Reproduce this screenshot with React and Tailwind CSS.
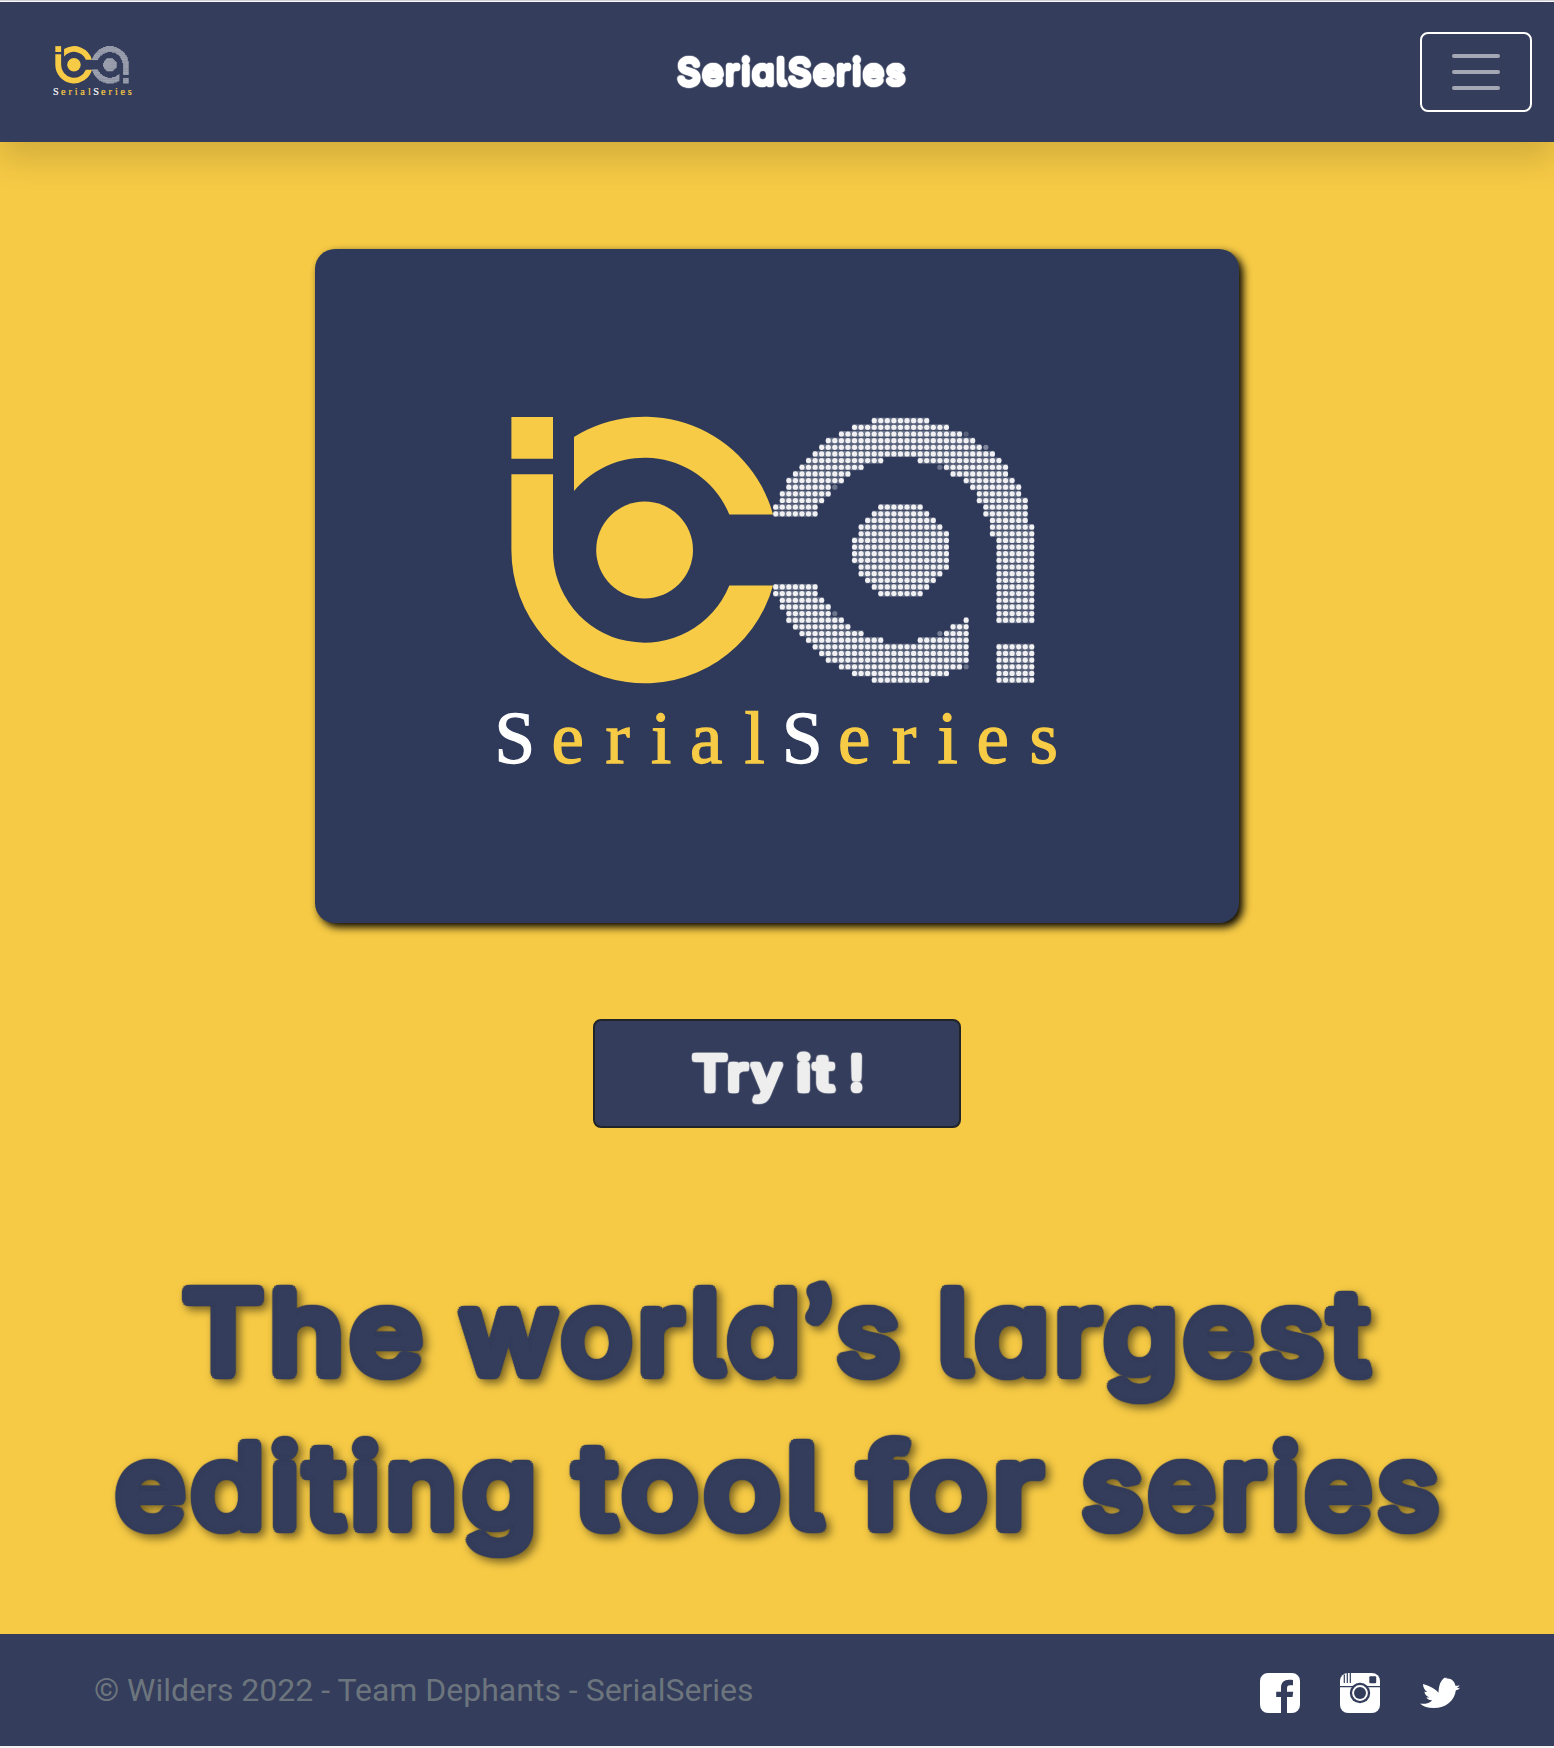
import { useLayoutEffect, useRef, useState } from "react";

// Columns of the dotted half of the logo, one entry per row: [first, last] runs.
const RIGHT_STEM = [34, 39];
const DOT_ROWS = [
  [[15, 23]],
  [[12, 26]],
  [[10, 28]],
  [[8, 30]],
  [[7, 31]],
  [[6, 33]],
  [[5, 16], [22, 34]],
  [[4, 13], [26, 35]],
  [[3, 11], [27, 35]],
  [[2, 10], [29, 36]],
  [[2, 8], [30, 37]],
  [[1, 8], [31, 37]],
  [[1, 7], [31, 38]],
  [[0, 6], [16, 22], [32, 38]],
  [[0, 6], [15, 23], [32, 38]],
  [[14, 24], [33, 38]],
  [[13, 25], [33, 39]],
  [[13, 26], [33, 39]],
  [[12, 26], RIGHT_STEM],
  [[12, 26], RIGHT_STEM],
  [[12, 26], RIGHT_STEM],
  [[12, 26], RIGHT_STEM],
  [[13, 26], RIGHT_STEM],
  [[13, 25], RIGHT_STEM],
  [[14, 24], RIGHT_STEM],
  [[0, 6], [15, 23], RIGHT_STEM],
  [[0, 6], [16, 22], RIGHT_STEM],
  [[1, 7], RIGHT_STEM],
  [[1, 8], RIGHT_STEM],
  [[2, 8], RIGHT_STEM],
  [[2, 10], [29, 29], RIGHT_STEM],
  [[3, 11], [27, 29]],
  [[4, 13], [26, 29]],
  [[5, 16], [22, 29]],
  [[6, 29], RIGHT_STEM],
  [[7, 29], RIGHT_STEM],
  [[8, 29], RIGHT_STEM],
  [[10, 28], RIGHT_STEM],
  [[12, 26], RIGHT_STEM],
  [[15, 23], RIGHT_STEM],
];

// Half-faded dots on the rim: [column, row, opacity]
const FAINT_DOTS = [
  [29, 2, 0.2], [32, 4, 0.4], [25, 7, 0.3], [9, 10, 0.3],
  [9, 29, 0.3], [25, 32, 0.35], [29, 37, 0.3],
];

const dots = DOT_ROWS.flatMap((runs, row) =>
  runs.flatMap(([from, to]) =>
    Array.from({ length: to - from + 1 }, (_, i) => [from + i, row, 0.9])
  )
).concat(FAINT_DOTS);

const dotX = (col) => 775.7 + col * 6.567;
const dotY = (row) => 420.7 + row * 6.65;

function Logo({ className }) {
  return (
    <svg viewBox="496 416 562 350" className={`overflow-visible ${className}`} aria-label="SerialSeries">
      <g fill="#f7cb45">
        <path d="M511.4 417H553v41.8h-41.6z" />
        <path d="M511.4 474.3H553V550A91.5 91.5 0 0 0 729.3 585.5H773A133.2 133.2 0 0 1 511.4 550z" />
        <path d="M574 437A133.2 133.2 0 0 1 773 514.5H729.3A91.5 91.5 0 0 0 574 491z" />
        <circle cx="644.6" cy="550" r="48.4" />
      </g>
      <g fill="#fff">
        {DOT_ROWS.flatMap((runs, row) =>
          runs.map(([from, to]) => (
            <rect key={`${row}-${from}`} x={dotX(from) - 2.2} y={dotY(row) - 3} width={dotX(to) - dotX(from) + 4.4} height="6" opacity="0.3" />
          ))
        )}
        {dots.map(([col, row, opacity]) => (
          <circle key={`${col}-${row}`} cx={dotX(col)} cy={dotY(row)} r="2.6" opacity={opacity} />
        ))}
      </g>
      <g fontFamily="'Liberation Serif', serif" fontSize="73" fill="#f7cb45" stroke="#f7cb45" strokeWidth="1.3">
        <text y="763" x="494.5 551.5 605.500 651 690 744.500"><tspan fill="#fff" stroke="#fff">S</tspan>erial</text>
        <text y="763" x="782 838 892 937.500 976.500 1029.500"><tspan fill="#fff" stroke="#fff">S</tspan>eries</text>
      </g>
    </svg>
  );
}

// Stretches one word horizontally to the width of its box.
function Word({ children, className }) {
  const box = useRef(null);
  const text = useRef(null);
  const [scale, setScale] = useState(1);
  useLayoutEffect(() => {
    const trailing = parseFloat(getComputedStyle(text.current).letterSpacing) || 0;
    setScale(box.current.clientWidth / (text.current.offsetWidth - trailing));
  }, [children]);
  return (
    <span ref={box} className={`block shrink-0 whitespace-nowrap ${className}`}>
      <span ref={text} className="inline-block origin-left tracking-[0.038em]" style={{ transform: `scaleX(${scale})` }}>
        {children}
      </span>
    </span>
  );
}

const ROUNDED =
  "font-['Inter',sans-serif] font-medium [font-feature-settings:'cv11','cv05'] [text-shadow:0.043em_0_1px,0.040em_0.017em_1px,0.031em_0.032em_1px,0.016em_0.042em_1px,0_0.045em_1px,-0.016em_0.042em_1px,-0.031em_0.032em_1px,-0.040em_0.017em_1px,-0.043em_0_1px,-0.040em_-0.017em_1px,-0.031em_-0.032em_1px,-0.016em_-0.042em_1px,0_-0.045em_1px,0.016em_-0.042em_1px,0.031em_-0.032em_1px,0.040em_-0.017em_1px]";

function Header() {
  return (
    <header className="relative flex h-[140px] items-center justify-between bg-[#343d5b] pl-[53px] pr-[22px] shadow-[0_16px_32px_rgba(0,0,0,0.15)]">
      <Logo className="mb-1 h-[49px] w-[79px]" />
      <div className={`ml-[29px] text-[37px] leading-[48px] text-white ${ROUNDED}`}>
        <Word className="w-[228px]">SerialSeries</Word>
      </div>
      <button className="flex h-20 w-28 flex-col items-center justify-center gap-3 rounded-lg border-2 border-white">
        <span className="h-1 w-12 rounded-full bg-white/55" />
        <span className="h-1 w-12 rounded-full bg-white/55" />
        <span className="h-1 w-12 rounded-full bg-white/55" />
      </button>
    </header>
  );
}

function FacebookIcon() {
  return (
    <svg viewBox="0 0 40 40" className="size-10">
      <path fill="#fff" fillRule="evenodd" d="M8 0h24a8 8 0 0 1 8 8v24a8 8 0 0 1-8 8h-5V24h5.5l.7-5.3H27v-3.2c0-2.2.8-3.3 3-3.3h3V7.1c-1-.2-2.300-.3-4-.3-5 0-8 3-8 7.900v4h-4.800V24H21v16H8a8 8 0 0 1-8-8V8a8 8 0 0 1 8-8z" />
    </svg>
  );
}

function InstagramIcon() {
  return (
    <svg viewBox="0 0 40 40" className="size-10">
      <rect width="40" height="40" rx="8" fill="#fff" />
      <g fill="#343d5b">
        <path d="M3.700 1.500h1.200V10H3.700zM6.700 0h1.200v10H6.700zM9.700 0h1.200v10H9.700zM0 13h40v1.200H0z" />
        <rect x="29.300" y="3.300" width="6.900" height="6.900" rx="1" />
        <circle cx="20" cy="20" r="10.200" />
      </g>
      <circle cx="20" cy="20" r="7.900" fill="#fff" />
      <circle cx="20" cy="20" r="6" fill="#343d5b" />
    </svg>
  );
}

function TwitterIcon() {
  return (
    <svg viewBox="0 0 40 40" className="size-10">
      <path
        fill="#fff"
        d="M0 30.400c4 1 7.800.2 10.500-1.700.8-.6 1.400-1 1.500-1.500-2.500.2-4.300-.7-5.600-2.700 1 .1 2 .1 2.700-.3-2.800-1-4.400-3-4.700-5.700.9.400 1.700.6 2.700.5C4.700 17.200 3 14.300 3 11c4.300 1.400 8.500 3 12 5.600 1.400 1 2.500 2 3.500 3.200C18.700 13 20.200 7.300 25.300 4.300L25.100 5.300 27 4.400 26.400 5.500c2.300-.4 4.700.2 6.700 2.400 1.300 1.300 2.100 3 2.300 4.800.9.300 2.500.1 4.100-.5-.4 1.200-1.400 2.200-2.800 2.700 1 .3 2.200.2 3.300-.2-.8 1.200-2.200 2.300-4.100 2.500C34.400 27.600 26 35.100 13.500 35 8 34.900 3 33.500 0 30.400z"
      />
    </svg>
  );
}

function Footer() {
  return (
    <footer className="flex h-28 items-center justify-between bg-[#343d5b] pl-[94px] pr-[94px]">
      <p className="font-['Roboto',sans-serif] text-[32px] leading-[48px] text-[#6c757d]">
        © Wilders 2022 - Team Dephants - SerialSeries
      </p>
      <div className="mt-[6px] flex gap-10">
        <FacebookIcon />
        <InstagramIcon />
        <TwitterIcon />
      </div>
    </footer>
  );
}

export default function App() {
  return (
    <div className="flex h-[1748px] w-[1554px] flex-col overflow-hidden border-b-2 border-[#f2f2f2] bg-[#f6ca45]">
      <div className="h-px shrink-0 bg-[#d3d5dc]" />
      <div className="h-px shrink-0 bg-white" />
      <Header />
      <main className="flex h-[1492px] flex-col items-center">
        <div className="mt-[107px] flex h-[674px] w-[924px] items-start justify-center rounded-[20px] bg-[#2f3a5a] pt-[167px] shadow-[4px_4px_8px_#000]">
          <Logo className="h-[350px] w-[562px]" />
        </div>
        <button className={`mt-24 flex h-[109px] w-[368px] items-center justify-center gap-[15px] rounded-lg border-2 border-[#212529] bg-[#343d5b] pb-0.5 pr-px text-[50px] leading-[60px] text-[#eee] ${ROUNDED}`}>
          <Word className="w-[90px]">Try</Word>
          <Word className="w-[38px]">it</Word>
          <span className="ml-0.5">!</span>
        </button>
        <h1 className={`mt-[128px] w-full text-[115px] leading-[154px] text-[#343d5b] drop-shadow-[4px_4px_4px_rgba(0,0,0,0.5)] ${ROUNDED}`}>
          <span className="flex h-[154px] pl-[182px]">
            <Word className="w-[241px]">The</Word>
            <Word className="ml-9 w-[441px]">
              world<span className="font-['Lato',sans-serif] font-bold leading-none">’</span>s
            </Word>
            <Word className="ml-[37px] w-[433px]">largest</Word>
          </span>
          <span className="flex h-[154px] pl-[115px]">
            <Word className="w-[422px]">editing</Word>
            <Word className="ml-[37px] w-[248px]">tool</Word>
            <Word className="ml-[37px] w-[184px]">for</Word>
            <Word className="ml-[38px] w-[358px]">series</Word>
          </span>
        </h1>
      </main>
      <Footer />
    </div>
  );
}
